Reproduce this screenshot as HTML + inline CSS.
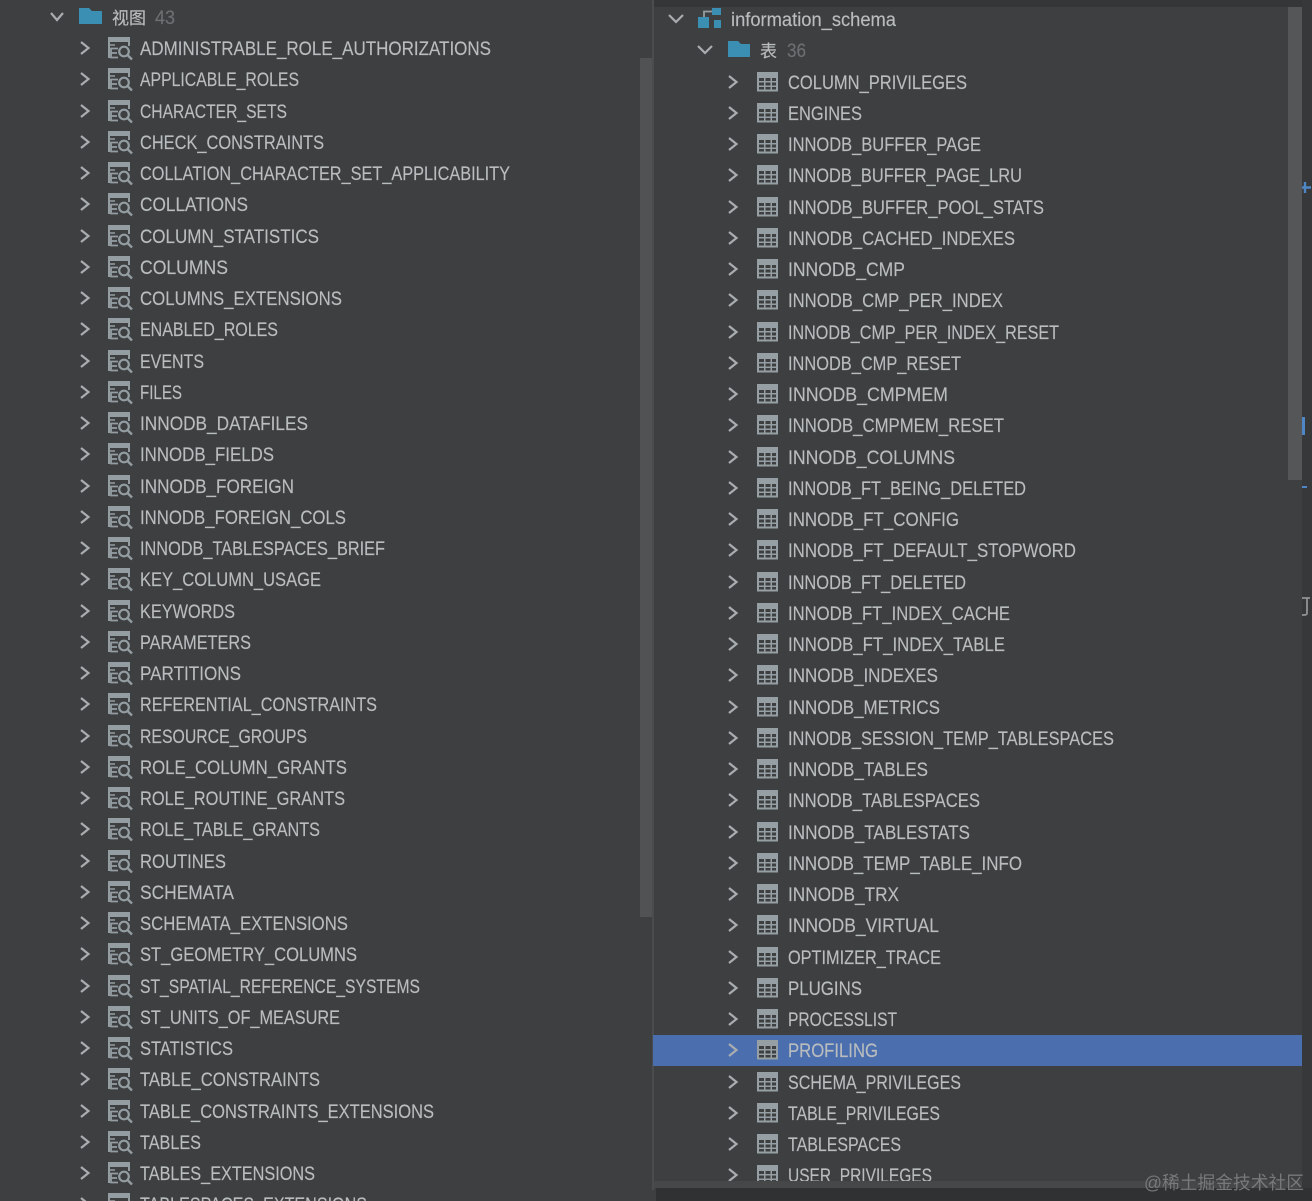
<!DOCTYPE html>
<html><head><meta charset="utf-8"><style>
html,body{margin:0;padding:0;background:#3d3f41;width:1312px;height:1201px;overflow:hidden}
svg{display:block;filter:blur(0.35px)}
text{font-family:"Liberation Sans","Noto Sans CJK SC",sans-serif;font-size:19px;fill:#b9bdbe;stroke:#b9bdbe;stroke-width:.15px}
</style></head><body>
<svg width="1312" height="1201" viewBox="0 0 1312 1201" xmlns="http://www.w3.org/2000/svg">
<defs>
<g id="l">
<path d="M81-6L88.500 0L81 6" fill="none" stroke="#a9adaf" stroke-width="2.200"/>
<g fill="none" stroke="#949ea2" stroke-width="2">
<rect x="108" y="-11" width="22" height="5" fill="#949ea2" stroke="none"/>
<path d="M109-6V10M129-6V-2" stroke-width="2"/>
<path d="M110-3H115" stroke-width="1.500"/>
<path d="M118 0.500H111V9.500H118M111 5H117" stroke-width="1.800"/>
<circle cx="124" cy="3.500" r="4.800" stroke-width="2.200"/>
<path d="M127.500 7L132 11.500" stroke-width="2.400"/>
</g>
</g>
<g id="r">
<path d="M729-6L736.500 0L729 6" fill="none" stroke="#a9adaf" stroke-width="2.200"/>
<rect x="757" y="-10" width="21" height="19.500" fill="#969fa3"/>
<g fill="#3d3f41">
<rect x="759" y="-4" width="5" height="3"/><rect x="765.500" y="-4" width="5" height="3"/><rect x="772" y="-4" width="4" height="3"/>
<rect x="759" y="0.500" width="5" height="3"/><rect x="765.500" y="0.500" width="5" height="3"/><rect x="772" y="0.500" width="4" height="3"/>
<rect x="759" y="5" width="5" height="2.500"/><rect x="765.500" y="5" width="5" height="2.500"/><rect x="772" y="5" width="4" height="2.500"/>
</g>
</g>
<clipPath id="rc"><rect x="653" y="7" width="650" height="1174"/></clipPath>
</defs>

<rect width="1312" height="1201" fill="#3d3f41"/>
<rect x="640" y="58" width="12" height="859" fill="#505253"/>
<rect x="652" y="0" width="2" height="1190" fill="#4a4c4e"/>
<rect x="654" y="0" width="658" height="7" fill="#343638"/>
<rect x="1302" y="0" width="10" height="1201" fill="#363839"/>
<rect x="654" y="1181" width="648" height="7" fill="#454749"/>
<rect x="656" y="1188" width="656" height="13" fill="#2f3133"/>

<path d="M51 13L57 20L63 13" fill="none" stroke="#a9adaf" stroke-width="2.200"/>
<path d="M79 8H89L92 11H102V24H79Z" fill="#3a8fb3"/>
<text x="112" y="24" textLength="34" lengthAdjust="spacingAndGlyphs" style="font-size:17px">视图</text>
<text x="155" y="24" textLength="20" lengthAdjust="spacingAndGlyphs" style="fill:#6d7072;stroke:#6d7072">43</text>

<g transform="translate(0,48)"><use href="#l"/><text x="140" y="7" textLength="351" lengthAdjust="spacingAndGlyphs">ADMINISTRABLE_ROLE_AUTHORIZATIONS</text></g>
<g transform="translate(0,79)"><use href="#l"/><text x="140" y="7" textLength="159" lengthAdjust="spacingAndGlyphs">APPLICABLE_ROLES</text></g>
<g transform="translate(0,111)"><use href="#l"/><text x="140" y="7" textLength="147" lengthAdjust="spacingAndGlyphs">CHARACTER_SETS</text></g>
<g transform="translate(0,142)"><use href="#l"/><text x="140" y="7" textLength="184" lengthAdjust="spacingAndGlyphs">CHECK_CONSTRAINTS</text></g>
<g transform="translate(0,173)"><use href="#l"/><text x="140" y="7" textLength="370" lengthAdjust="spacingAndGlyphs">COLLATION_CHARACTER_SET_APPLICABILITY</text></g>
<g transform="translate(0,204)"><use href="#l"/><text x="140" y="7" textLength="108" lengthAdjust="spacingAndGlyphs">COLLATIONS</text></g>
<g transform="translate(0,236)"><use href="#l"/><text x="140" y="7" textLength="179" lengthAdjust="spacingAndGlyphs">COLUMN_STATISTICS</text></g>
<g transform="translate(0,267)"><use href="#l"/><text x="140" y="7" textLength="88" lengthAdjust="spacingAndGlyphs">COLUMNS</text></g>
<g transform="translate(0,298)"><use href="#l"/><text x="140" y="7" textLength="202" lengthAdjust="spacingAndGlyphs">COLUMNS_EXTENSIONS</text></g>
<g transform="translate(0,329)"><use href="#l"/><text x="140" y="7" textLength="138" lengthAdjust="spacingAndGlyphs">ENABLED_ROLES</text></g>
<g transform="translate(0,361)"><use href="#l"/><text x="140" y="7" textLength="64" lengthAdjust="spacingAndGlyphs">EVENTS</text></g>
<g transform="translate(0,392)"><use href="#l"/><text x="140" y="7" textLength="42" lengthAdjust="spacingAndGlyphs">FILES</text></g>
<g transform="translate(0,423)"><use href="#l"/><text x="140" y="7" textLength="168" lengthAdjust="spacingAndGlyphs">INNODB_DATAFILES</text></g>
<g transform="translate(0,454)"><use href="#l"/><text x="140" y="7" textLength="134" lengthAdjust="spacingAndGlyphs">INNODB_FIELDS</text></g>
<g transform="translate(0,486)"><use href="#l"/><text x="140" y="7" textLength="154" lengthAdjust="spacingAndGlyphs">INNODB_FOREIGN</text></g>
<g transform="translate(0,517)"><use href="#l"/><text x="140" y="7" textLength="206" lengthAdjust="spacingAndGlyphs">INNODB_FOREIGN_COLS</text></g>
<g transform="translate(0,548)"><use href="#l"/><text x="140" y="7" textLength="245" lengthAdjust="spacingAndGlyphs">INNODB_TABLESPACES_BRIEF</text></g>
<g transform="translate(0,579)"><use href="#l"/><text x="140" y="7" textLength="181" lengthAdjust="spacingAndGlyphs">KEY_COLUMN_USAGE</text></g>
<g transform="translate(0,611)"><use href="#l"/><text x="140" y="7" textLength="95" lengthAdjust="spacingAndGlyphs">KEYWORDS</text></g>
<g transform="translate(0,642)"><use href="#l"/><text x="140" y="7" textLength="111" lengthAdjust="spacingAndGlyphs">PARAMETERS</text></g>
<g transform="translate(0,673)"><use href="#l"/><text x="140" y="7" textLength="101" lengthAdjust="spacingAndGlyphs">PARTITIONS</text></g>
<g transform="translate(0,704)"><use href="#l"/><text x="140" y="7" textLength="237" lengthAdjust="spacingAndGlyphs">REFERENTIAL_CONSTRAINTS</text></g>
<g transform="translate(0,736)"><use href="#l"/><text x="140" y="7" textLength="167" lengthAdjust="spacingAndGlyphs">RESOURCE_GROUPS</text></g>
<g transform="translate(0,767)"><use href="#l"/><text x="140" y="7" textLength="207" lengthAdjust="spacingAndGlyphs">ROLE_COLUMN_GRANTS</text></g>
<g transform="translate(0,798)"><use href="#l"/><text x="140" y="7" textLength="205" lengthAdjust="spacingAndGlyphs">ROLE_ROUTINE_GRANTS</text></g>
<g transform="translate(0,829)"><use href="#l"/><text x="140" y="7" textLength="180" lengthAdjust="spacingAndGlyphs">ROLE_TABLE_GRANTS</text></g>
<g transform="translate(0,861)"><use href="#l"/><text x="140" y="7" textLength="86" lengthAdjust="spacingAndGlyphs">ROUTINES</text></g>
<g transform="translate(0,892)"><use href="#l"/><text x="140" y="7" textLength="94" lengthAdjust="spacingAndGlyphs">SCHEMATA</text></g>
<g transform="translate(0,923)"><use href="#l"/><text x="140" y="7" textLength="208" lengthAdjust="spacingAndGlyphs">SCHEMATA_EXTENSIONS</text></g>
<g transform="translate(0,954)"><use href="#l"/><text x="140" y="7" textLength="217" lengthAdjust="spacingAndGlyphs">ST_GEOMETRY_COLUMNS</text></g>
<g transform="translate(0,986)"><use href="#l"/><text x="140" y="7" textLength="280" lengthAdjust="spacingAndGlyphs">ST_SPATIAL_REFERENCE_SYSTEMS</text></g>
<g transform="translate(0,1017)"><use href="#l"/><text x="140" y="7" textLength="200" lengthAdjust="spacingAndGlyphs">ST_UNITS_OF_MEASURE</text></g>
<g transform="translate(0,1048)"><use href="#l"/><text x="140" y="7" textLength="93" lengthAdjust="spacingAndGlyphs">STATISTICS</text></g>
<g transform="translate(0,1079)"><use href="#l"/><text x="140" y="7" textLength="180" lengthAdjust="spacingAndGlyphs">TABLE_CONSTRAINTS</text></g>
<g transform="translate(0,1111)"><use href="#l"/><text x="140" y="7" textLength="294" lengthAdjust="spacingAndGlyphs">TABLE_CONSTRAINTS_EXTENSIONS</text></g>
<g transform="translate(0,1142)"><use href="#l"/><text x="140" y="7" textLength="61" lengthAdjust="spacingAndGlyphs">TABLES</text></g>
<g transform="translate(0,1173)"><use href="#l"/><text x="140" y="7" textLength="175" lengthAdjust="spacingAndGlyphs">TABLES_EXTENSIONS</text></g>
<g transform="translate(0,1204)"><use href="#l"/><text x="140" y="7" textLength="227" lengthAdjust="spacingAndGlyphs">TABLESPACES_EXTENSIONS</text></g>

<g clip-path="url(#rc)">
<rect x="653" y="1035" width="649" height="31" fill="#4b6eaf"/>
<path d="M669 15L676 22L683 15" fill="none" stroke="#a9adaf" stroke-width="2.200"/>
<rect x="712" y="8" width="9" height="7" fill="#3a8fb3"/>
<rect x="698" y="17" width="11" height="11" fill="#3a8fb3"/>
<rect x="714" y="20" width="7" height="8" fill="#3a8fb3"/>
<path d="M712 11.500H704V17" fill="none" stroke="#949ea2" stroke-width="1.800"/>
<text x="731" y="26" textLength="165" lengthAdjust="spacingAndGlyphs">information_schema</text>
<path d="M698 46L705 53L712 46" fill="none" stroke="#a9adaf" stroke-width="2.200"/>
<path d="M728 41H738L741 44H750V57H728Z" fill="#3a8fb3"/>
<text x="760" y="57" style="font-size:17px">表</text>
<text x="787" y="57" textLength="19" lengthAdjust="spacingAndGlyphs" style="fill:#6d7072;stroke:#6d7072">36</text>

<g transform="translate(0,82)"><use href="#r"/><text x="788" y="7" textLength="179" lengthAdjust="spacingAndGlyphs">COLUMN_PRIVILEGES</text></g>
<g transform="translate(0,113)"><use href="#r"/><text x="788" y="7" textLength="74" lengthAdjust="spacingAndGlyphs">ENGINES</text></g>
<g transform="translate(0,144)"><use href="#r"/><text x="788" y="7" textLength="193" lengthAdjust="spacingAndGlyphs">INNODB_BUFFER_PAGE</text></g>
<g transform="translate(0,175)"><use href="#r"/><text x="788" y="7" textLength="234" lengthAdjust="spacingAndGlyphs">INNODB_BUFFER_PAGE_LRU</text></g>
<g transform="translate(0,207)"><use href="#r"/><text x="788" y="7" textLength="256" lengthAdjust="spacingAndGlyphs">INNODB_BUFFER_POOL_STATS</text></g>
<g transform="translate(0,238)"><use href="#r"/><text x="788" y="7" textLength="227" lengthAdjust="spacingAndGlyphs">INNODB_CACHED_INDEXES</text></g>
<g transform="translate(0,269)"><use href="#r"/><text x="788" y="7" textLength="117" lengthAdjust="spacingAndGlyphs">INNODB_CMP</text></g>
<g transform="translate(0,300)"><use href="#r"/><text x="788" y="7" textLength="215" lengthAdjust="spacingAndGlyphs">INNODB_CMP_PER_INDEX</text></g>
<g transform="translate(0,332)"><use href="#r"/><text x="788" y="7" textLength="271" lengthAdjust="spacingAndGlyphs">INNODB_CMP_PER_INDEX_RESET</text></g>
<g transform="translate(0,363)"><use href="#r"/><text x="788" y="7" textLength="173" lengthAdjust="spacingAndGlyphs">INNODB_CMP_RESET</text></g>
<g transform="translate(0,394)"><use href="#r"/><text x="788" y="7" textLength="160" lengthAdjust="spacingAndGlyphs">INNODB_CMPMEM</text></g>
<g transform="translate(0,425)"><use href="#r"/><text x="788" y="7" textLength="216" lengthAdjust="spacingAndGlyphs">INNODB_CMPMEM_RESET</text></g>
<g transform="translate(0,457)"><use href="#r"/><text x="788" y="7" textLength="167" lengthAdjust="spacingAndGlyphs">INNODB_COLUMNS</text></g>
<g transform="translate(0,488)"><use href="#r"/><text x="788" y="7" textLength="238" lengthAdjust="spacingAndGlyphs">INNODB_FT_BEING_DELETED</text></g>
<g transform="translate(0,519)"><use href="#r"/><text x="788" y="7" textLength="171" lengthAdjust="spacingAndGlyphs">INNODB_FT_CONFIG</text></g>
<g transform="translate(0,550)"><use href="#r"/><text x="788" y="7" textLength="288" lengthAdjust="spacingAndGlyphs">INNODB_FT_DEFAULT_STOPWORD</text></g>
<g transform="translate(0,582)"><use href="#r"/><text x="788" y="7" textLength="178" lengthAdjust="spacingAndGlyphs">INNODB_FT_DELETED</text></g>
<g transform="translate(0,613)"><use href="#r"/><text x="788" y="7" textLength="222" lengthAdjust="spacingAndGlyphs">INNODB_FT_INDEX_CACHE</text></g>
<g transform="translate(0,644)"><use href="#r"/><text x="788" y="7" textLength="217" lengthAdjust="spacingAndGlyphs">INNODB_FT_INDEX_TABLE</text></g>
<g transform="translate(0,675)"><use href="#r"/><text x="788" y="7" textLength="150" lengthAdjust="spacingAndGlyphs">INNODB_INDEXES</text></g>
<g transform="translate(0,707)"><use href="#r"/><text x="788" y="7" textLength="152" lengthAdjust="spacingAndGlyphs">INNODB_METRICS</text></g>
<g transform="translate(0,738)"><use href="#r"/><text x="788" y="7" textLength="326" lengthAdjust="spacingAndGlyphs">INNODB_SESSION_TEMP_TABLESPACES</text></g>
<g transform="translate(0,769)"><use href="#r"/><text x="788" y="7" textLength="140" lengthAdjust="spacingAndGlyphs">INNODB_TABLES</text></g>
<g transform="translate(0,800)"><use href="#r"/><text x="788" y="7" textLength="192" lengthAdjust="spacingAndGlyphs">INNODB_TABLESPACES</text></g>
<g transform="translate(0,832)"><use href="#r"/><text x="788" y="7" textLength="182" lengthAdjust="spacingAndGlyphs">INNODB_TABLESTATS</text></g>
<g transform="translate(0,863)"><use href="#r"/><text x="788" y="7" textLength="234" lengthAdjust="spacingAndGlyphs">INNODB_TEMP_TABLE_INFO</text></g>
<g transform="translate(0,894)"><use href="#r"/><text x="788" y="7" textLength="111" lengthAdjust="spacingAndGlyphs">INNODB_TRX</text></g>
<g transform="translate(0,925)"><use href="#r"/><text x="788" y="7" textLength="151" lengthAdjust="spacingAndGlyphs">INNODB_VIRTUAL</text></g>
<g transform="translate(0,957)"><use href="#r"/><text x="788" y="7" textLength="153" lengthAdjust="spacingAndGlyphs">OPTIMIZER_TRACE</text></g>
<g transform="translate(0,988)"><use href="#r"/><text x="788" y="7" textLength="74" lengthAdjust="spacingAndGlyphs">PLUGINS</text></g>
<g transform="translate(0,1019)"><use href="#r"/><text x="788" y="7" textLength="109" lengthAdjust="spacingAndGlyphs">PROCESSLIST</text></g>
<g transform="translate(0,1050)"><use href="#r"/><text x="788" y="7" textLength="90" lengthAdjust="spacingAndGlyphs">PROFILING</text></g>
<g transform="translate(0,1082)"><use href="#r"/><text x="788" y="7" textLength="173" lengthAdjust="spacingAndGlyphs">SCHEMA_PRIVILEGES</text></g>
<g transform="translate(0,1113)"><use href="#r"/><text x="788" y="7" textLength="152" lengthAdjust="spacingAndGlyphs">TABLE_PRIVILEGES</text></g>
<g transform="translate(0,1144)"><use href="#r"/><text x="788" y="7" textLength="113" lengthAdjust="spacingAndGlyphs">TABLESPACES</text></g>
<g transform="translate(0,1175)"><use href="#r"/><text x="788" y="7" textLength="144" lengthAdjust="spacingAndGlyphs">USER_PRIVILEGES</text></g>
<rect x="1288" y="7" width="14" height="473" fill="#545657"/>
</g>

<path d="M1302 187.500H1311M1305 182V193" stroke="#4f86c6" stroke-width="2.400" fill="none"/>
<rect x="1302" y="417" width="3" height="18" fill="#4f86c6"/>
<rect x="1302" y="486" width="5" height="2" fill="#4f86c6"/>
<path d="M1302 598H1310M1307 598V613Q1307 615 1304 615H1302" stroke="#8f9394" stroke-width="1.800" fill="none"/>

<text x="1144" y="1189" textLength="160" lengthAdjust="spacingAndGlyphs" style="font-size:18px;fill:#77797a;stroke:none">@稀土掘金技术社区</text>
</svg>
</body></html>
